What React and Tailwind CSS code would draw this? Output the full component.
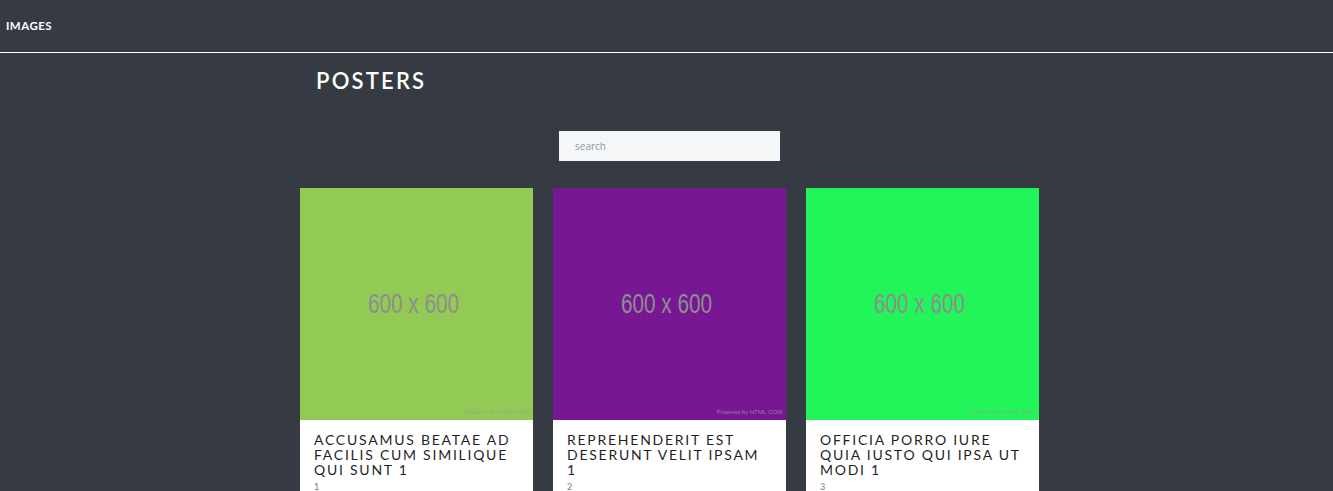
import React from 'react';

const posters = [
  { id: 1, color: 'bg-[#93c955]', title: 'Accusamus beatae ad facilis cum similique qui sunt 1' },
  { id: 2, color: 'bg-[#781793]', title: 'Reprehenderit est deserunt velit ipsam 1' },
  { id: 3, color: 'bg-[#22f55a]', title: 'Officia porro iure quia iusto qui ipsa ut modi 1' },
];

const PosterCard = ({ poster }) => (
  <div className="bg-white flex flex-col">
    {/* Placeholder image */}
    <div className={`${poster.color} h-[232px] flex flex-col items-center justify-center relative`}>
      <span className="text-[28px] leading-none text-[#8e8e8e] font-['Liberation_Sans',Arial,sans-serif] scale-x-[0.74] -mt-[1px] mr-[7px]">
        600 x 600
      </span>
      <span className="absolute right-[4px] bottom-[3px] text-[6px] text-[#9a9a9a]/80 font-['Liberation_Sans',Arial,sans-serif]">
        Powered by HTML.COM
      </span>
    </div>
    <div className="px-[14px] pt-[12px] pb-3">
      <h2 className="uppercase text-[14px] leading-[15px] tracking-[0.125em] text-[#1f1f2a] font-['Lato',sans-serif]">
        {poster.title}
      </h2>
      <p className="mt-[3px] text-[9px] text-[#84708c] font-['Lato',sans-serif]">{poster.id}</p>
    </div>
  </div>
);

export default function App() {
  return (
    <div className="min-h-screen bg-[#363a42] font-['Lato',sans-serif] overflow-hidden">
      {/* Top bar */}
      <header className="h-[53px] flex items-center px-[6px] border-b border-white">
        <span className="text-white text-[11.5px] font-bold tracking-[0.04em]">IMAGES</span>
      </header>

      <main className="mx-auto w-[733px]">
        <div className="w-[739px]">
          <h1 className="pl-[16px] pt-[14px] text-white text-[22px] font-semibold tracking-[0.1em] leading-[28px]">
            POSTERS
          </h1>

          <div className="flex justify-center mt-[36px]">
            <input
              type="text"
              placeholder="search"
              className="w-[221px] h-[30px] bg-[#f5f6f8] px-[16px] text-[10px] text-gray-700 placeholder:text-[#8d98a3] font-['Open_Sans',sans-serif] outline-none"
            />
          </div>

          <div className="grid grid-cols-[233px_233px_233px] gap-x-[20px] mt-[27px]">
            {posters.map((p) => (
              <PosterCard key={p.id} poster={p} />
            ))}
          </div>
        </div>
      </main>
    </div>
  );
}
